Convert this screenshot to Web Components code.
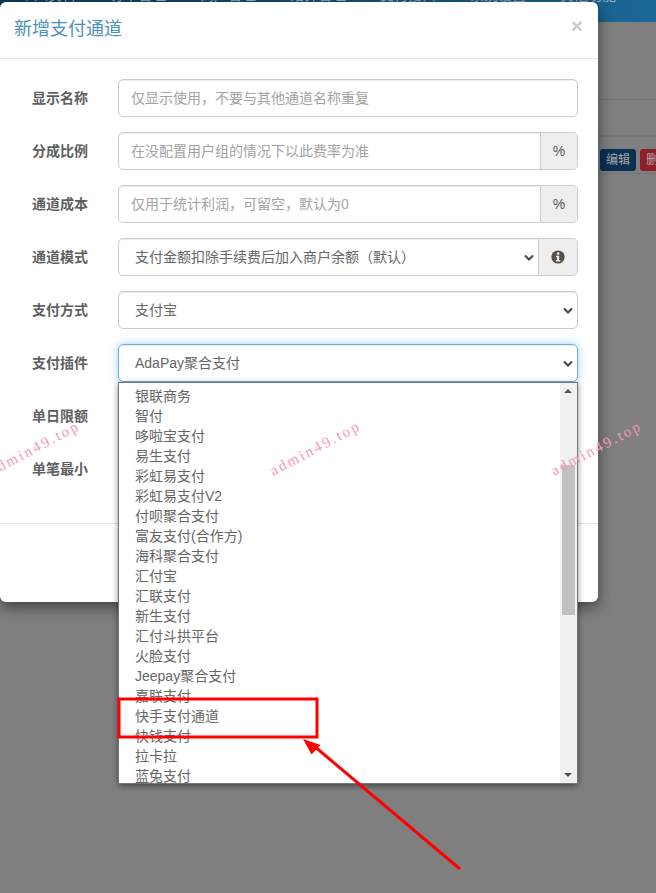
<!DOCTYPE html>
<html lang="zh">
<head>
<meta charset="utf-8">
<title>新增支付通道</title>
<style>
    html, body { margin: 0; height: 100%; }
    body {
        background: #7f7f7f;
        font-family: "Liberation Sans", "Noto Sans CJK SC", sans-serif;
        font-size: 14px;
        color: #555;
        overflow: hidden;
    }
</style>
</head>
<body>

<admin-page>
    <span slot="nav">个人资料</span>
    <span slot="nav">订单管理</span>
    <span slot="nav">商户管理</span>
    <span slot="nav">结算管理</span>
    <span slot="nav">支付接口</span>
    <span slot="nav">系统设置</span>
    <span slot="nav">其他功能</span>
</admin-page>

<pay-modal heading="新增支付通道">
    <form-row label="显示名称"><text-field placeholder="仅显示使用，不要与其他通道名称重复"></text-field></form-row>
    <form-row label="分成比例"><text-field placeholder="在没配置用户组的情况下以此费率为准" addon="%"></text-field></form-row>
    <form-row label="通道成本"><text-field placeholder="仅用于统计利润，可留空，默认为0" addon="%"></text-field></form-row>
    <form-row label="通道模式"><select-field info>支付金额扣除手续费后加入商户余额（默认）</select-field></form-row>
    <form-row label="支付方式"><select-field>支付宝</select-field></form-row>
    <form-row label="支付插件">
        <select-field focused>
            AdaPay聚合支付
            <option-list slot="menu">
                <span>银联商务</span>
                <span>智付</span>
                <span>哆啦宝支付</span>
                <span>易生支付</span>
                <span>彩虹易支付</span>
                <span>彩虹易支付V2</span>
                <span>付呗聚合支付</span>
                <span>富友支付(合作方)</span>
                <span>海科聚合支付</span>
                <span>汇付宝</span>
                <span>汇联支付</span>
                <span>新生支付</span>
                <span>汇付斗拱平台</span>
                <span>火脸支付</span>
                <span>Jeepay聚合支付</span>
                <span>嘉联支付</span>
                <span>快手支付通道</span>
                <span>快钱支付</span>
                <span>拉卡拉</span>
                <span>蓝兔支付</span>
            </option-list>
        </select-field>
    </form-row>
    <form-row label="单日限额"><text-field></text-field></form-row>
    <form-row label="单笔最小"><text-field></text-field></form-row>
</pay-modal>

<water-mark></water-mark>
<red-annotation></red-annotation>

<script>
class AdminPage extends HTMLElement {
    constructor() {
        super();
        this.shadow = this.attachShadow({mode: 'open'});
        this.shadow.innerHTML = `
        <style>
            :host{
                display:block;
            }
            .nav{
                height:22px;
                overflow:hidden;
                background:linear-gradient(90deg,#0f3a57,#1b6896);
                box-sizing:border-box;
                padding-left:20px;
                display:flex;
                gap:34px;
                color:#9fb2c0;
                font-size:14px;
                line-height:14px;
                margin-bottom:77px;
            }
            .nav ::slotted(span){
                margin-top:-12px;
                white-space:nowrap;
            }
            .row{
                border-top:1px solid #767676;
                padding-left:600px;
            }
            .row.head{
                height:35px;
            }
            .row.thick{
                border-top-width:2px;
                height:38px;
                display:flex;
                gap:4px;
                align-items:center;
                padding-top:1px;
                box-sizing:border-box;
            }
            .btn{
                flex:none;
                width:36px;
                height:22px;
                line-height:22px;
                border-radius:3px;
                text-align:center;
                font-size:12px;
                color:#a9a9a9;
                background:#0b2f55;
                margin-top:8px;
            }
            .btn.red{
                background:#8e1f29;
            }
            .row.end{
                height:20px;
            }
        </style>
        <div class="nav"><slot name="nav"></slot></div>
        <div class="row head"></div>
        <div class="row thick">
            <div class="btn">编辑</div>
            <div class="btn red">删除</div>
        </div>
        <div class="row end"></div>
        `;
    }
}

class PayModal extends HTMLElement {
    constructor() {
        super();
        this.shadow = this.attachShadow({mode: 'open'});
    }

    connectedCallback(){
        this.shadow.innerHTML = `
        <style>
            :host{
                display:block;
                position:absolute;
                top:2px;
                left:0;
                width:598px;
                height:600px;
                background:#fff;
                border-radius:6px;
                box-shadow:0 5px 15px rgba(0,0,0,.5);
            }
            .header{
                display:flex;
                justify-content:space-between;
                height:57px;
                box-sizing:border-box;
                padding:15px 15px 0 14px;
                border-bottom:1px solid #e5e5e5;
            }
            h4{
                margin:0;
                font-size:18px;
                font-weight:400;
                line-height:24px;
                color:#4a90bd;
            }
            .close{
                font-size:21px;
                font-weight:700;
                line-height:18px;
                color:#ccc;
            }
            .body{
                padding:20px 20px 20px 0;
                border-bottom:1px solid #e5e5e5;
                display:flex;
                flex-direction:column;
                gap:15px;
            }
            .body ::slotted(form-row:last-child){
                margin-bottom:15px;
            }
        </style>
        <div class="header">
            <h4>${this.getAttribute('heading')}</h4>
            <span class="close">×</span>
        </div>
        <div class="body"><slot></slot></div>
        `;
    }
}

class FormRow extends HTMLElement {
    constructor() {
        super();
        this.shadow = this.attachShadow({mode: 'open'});
    }

    connectedCallback(){
        this.shadow.innerHTML = `
        <style>
            :host{
                display:grid;
                grid-template-columns:88px 1fr;
                column-gap:30px;
                align-items:center;
                height:38px;
            }
            label{
                text-align:right;
                font-weight:700;
                font-size:14px;
                color:#5f5f5f;
                margin-top:-3px;
            }
        </style>
        <label>${this.getAttribute('label')}</label>
        <slot></slot>
        `;
    }
}

class TextField extends HTMLElement {
    constructor() {
        super();
        this.shadow = this.attachShadow({mode: 'open'});
    }

    connectedCallback(){
        const addon = this.getAttribute('addon');
        this.shadow.innerHTML = `
        <style>
            :host{
                display:flex;
                height:38px;
                box-sizing:border-box;
                border:1px solid #ccc;
                border-radius:5px;
                box-shadow:inset 0 1px 1px rgba(0,0,0,.075);
                overflow:hidden;
            }
            .value{
                flex:1;
                padding:0 12px;
                line-height:36px;
                color:#a3a3a3;
                white-space:nowrap;
            }
            .addon{
                width:36px;
                border-left:1px solid #ccc;
                background:#eee;
                text-align:center;
                line-height:36px;
                color:#555;
            }
        </style>
        <div class="value">${this.getAttribute('placeholder') || ''}</div>
        ${addon ? `<div class="addon">${addon}</div>` : ''}
        `;
    }
}

class SelectField extends HTMLElement {
    constructor() {
        super();
        this.shadow = this.attachShadow({mode: 'open'});
    }

    connectedCallback(){
        const info = this.hasAttribute('info');
        this.shadow.innerHTML = `
        <style>
            :host{
                display:flex;
                position:relative;
                height:38px;
                box-sizing:border-box;
                border:1px solid #ccc;
                border-radius:5px;
                box-shadow:inset 0 1px 1px rgba(0,0,0,.075);
            }
            :host([focused]){
                border-color:#66afe9;
                box-shadow:inset 0 1px 1px rgba(0,0,0,.075),0 0 8px rgba(102,175,233,.6);
            }
            .value{
                flex:1;
                display:flex;
                align-items:center;
                justify-content:space-between;
                padding:0 4px 0 16px;
                color:#666;
                white-space:nowrap;
            }
            .value span{
                margin-top:-2px;
            }
            .value svg{
                width:10px;
                height:7px;
            }
            .addon{
                width:38px;
                display:flex;
                align-items:center;
                justify-content:center;
                border-left:1px solid #ccc;
                background:#eee;
                border-radius:0 4px 4px 0;
            }
            .addon svg{
                width:14px;
                height:14px;
            }
        </style>
        <div class="value">
            <span><slot></slot></span>
            <svg viewBox="0 0 10 7"><path d="M1 1.5l4 4 4-4" fill="none" stroke="#444" stroke-width="2"/></svg>
        </div>
        ${info ? `<div class="addon"><svg viewBox="0 0 14 14"><circle cx="7" cy="7" r="6.6" fill="#5a5048"/><rect x="5.9" y="2.4" width="2.4" height="2.2" fill="#eee"/><path d="M4.9 5.7h3.3v4.3h1v1.4H4.9V10h1V7.1h-1z" fill="#eee"/></svg></div>` : ''}
        <slot name="menu"></slot>
        `;
    }
}

class OptionList extends HTMLElement {
    constructor() {
        super();
        this.shadow = this.attachShadow({mode: 'open'});
        this.shadow.innerHTML = `
        <style>
            :host{
                display:flex;
                position:absolute;
                top:37px;
                left:-1px;
                right:-1px;
                height:402px;
                box-sizing:border-box;
                border:1px solid #767676;
                background:#fff;
                box-shadow:0 2px 6px rgba(0,0,0,.45);
                z-index:5;
                overflow:hidden;
            }
            .items{
                flex:1;
                padding-top:3px;
                display:flex;
                flex-direction:column;
                overflow:hidden;
            }
            .items ::slotted(span){
                flex:none;
                display:block;
                height:20px;
                line-height:20px;
                padding-left:16px;
                font-size:14px;
                color:#666;
                white-space:nowrap;
            }
            .bar{
                width:17px;
                flex:none;
                background:#f1f1f1;
                position:relative;
            }
            .thumb{
                position:absolute;
                top:82px;
                left:2px;
                width:13px;
                height:150px;
                background:#c1c1c1;
            }
            .arrow{
                position:absolute;
                left:4px;
                width:0;
                height:0;
                border-left:4px solid transparent;
                border-right:4px solid transparent;
            }
            .up{
                top:6px;
                border-bottom:4px solid #505050;
            }
            .down{
                bottom:6px;
                border-top:4px solid #505050;
            }
        </style>
        <div class="items"><slot></slot></div>
        <div class="bar">
            <div class="arrow up"></div>
            <div class="thumb"></div>
            <div class="arrow down"></div>
        </div>
        `;
    }
}

class WaterMark extends HTMLElement {
    constructor() {
        super();
        this.shadow = this.attachShadow({mode: 'open'});
        this.shadow.innerHTML = `
        <style>
            :host{
                display:block;
                position:absolute;
                top:0;
                left:0;
                width:656px;
                height:893px;
                overflow:hidden;
                pointer-events:none;
                z-index:10;
            }
            span{
                position:absolute;
                top:438px;
                font-family:"Liberation Serif",serif;
                font-size:15px;
                line-height:20px;
                letter-spacing:2.3px;
                color:#f29ab8;
                white-space:nowrap;
                transform:rotate(-28deg);
                transform-origin:center;
            }
        </style>
        <span style="left:-16px">admin49.top</span>
        <span style="left:265px">admin49.top</span>
        <span style="left:546px">admin49.top</span>
        `;
    }
}

class RedAnnotation extends HTMLElement {
    constructor() {
        super();
        this.shadow = this.attachShadow({mode: 'open'});
        this.shadow.innerHTML = `
        <style>
            :host{
                display:block;
                position:absolute;
                top:0;
                left:0;
                pointer-events:none;
                z-index:11;
            }
            svg{
                display:block;
            }
        </style>
        <svg width="656" height="893" viewBox="0 0 656 893">
            <rect x="119" y="699" width="198" height="38" fill="none" stroke="#f00" stroke-width="3"/>
            <path d="M460 869L314 746" stroke="#f00" stroke-width="3" fill="none"/>
            <path d="M303 739L320.5 745L311.5 754.5Z" fill="#f00"/>
        </svg>
        `;
    }
}

customElements.define('admin-page', AdminPage);
customElements.define('pay-modal', PayModal);
customElements.define('form-row', FormRow);
customElements.define('text-field', TextField);
customElements.define('select-field', SelectField);
customElements.define('option-list', OptionList);
customElements.define('water-mark', WaterMark);
customElements.define('red-annotation', RedAnnotation);
</script>
</body>
</html>
